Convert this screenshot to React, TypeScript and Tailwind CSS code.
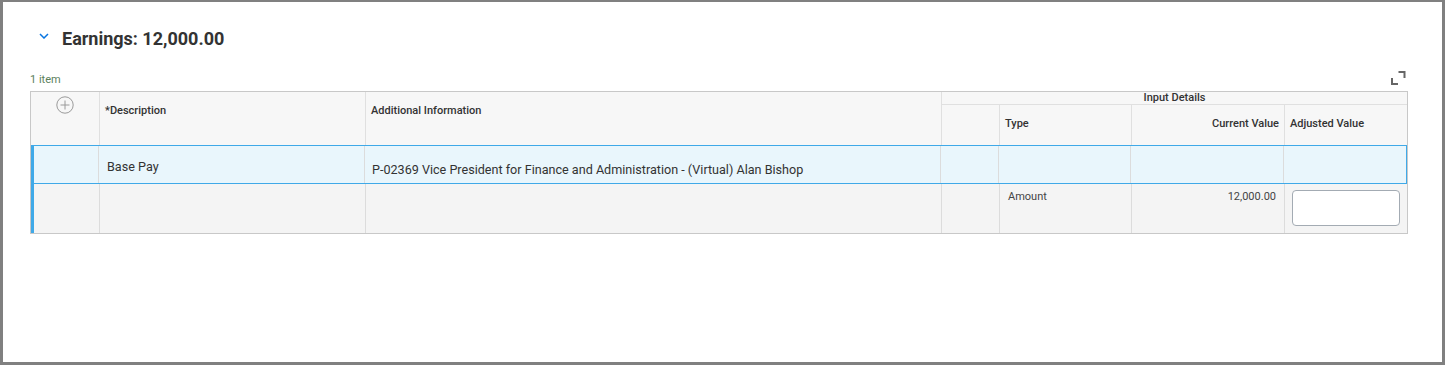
import { Fragment } from 'react';

const font = { fontFamily: 'Roboto, "Liberation Sans", sans-serif' };

function Chevron() {
  return (
    <svg width="10" height="6" viewBox="0 0 10 6" className="mt-[-7px]">
      <polyline points="1,1 5,5 9,1" fill="none" stroke="#0875e1" strokeWidth="1.5" />
    </svg>
  );
}

function ExpandIcon() {
  return (
    <svg width="15" height="14" viewBox="0 0 15 14">
      <path d="M7.5 1H13.5V7" fill="none" stroke="#666" strokeWidth="2" />
      <path d="M1 7V13H7" fill="none" stroke="#666" strokeWidth="2" />
    </svg>
  );
}

function PlusCircle() {
  return (
    <svg width="18" height="18" viewBox="0 0 18 18">
      <circle cx="9" cy="9" r="8.2" fill="none" stroke="#9a9a9a" strokeWidth="1" />
      <path d="M9 4.5V13.5M4.5 9H13.5" stroke="#9a9a9a" strokeWidth="1" />
    </svg>
  );
}

export default function App() {
  return (
    <div
      className="w-[1445px] h-[365px] bg-white border-[#808080] border-l-[3px] border-r-[3px] border-t-2 border-b-[3px] pl-[27px] pt-[25px]"
      style={font}
    >
      <div className="flex items-center h-[24px]">
        <div className="w-[9px]" />
        <Chevron />
        <h1 className="ml-[13px] text-[18px] leading-[24px] font-bold text-[#333333]">Earnings: 12,000.00</h1>
      </div>

      <div className="flex items-start justify-between w-[1378px] mt-[20px] h-[16px]">
        <span className="pt-[2px] text-[11px] leading-[14px] text-[#5b7f5b]">1 item</span>
        <div className="mr-[2px]">
          <ExpandIcon />
        </div>
      </div>

      <div className="w-[1378px] mt-[4px] border border-[#c8c8c8] text-[#333333]">
        {/* header */}
        <div className="flex h-[53px] bg-[#f7f7f7]">
          <div className="w-[69px] border-r border-[#e0e0e0] flex justify-center pt-[4px]">
            <PlusCircle />
          </div>
          <div className="w-[266px] border-r border-[#e0e0e0] pl-[5px] pt-[12px] text-[11px] leading-[14px] font-medium">
            *Description
          </div>
          <div className="w-[576px] border-r border-[#e0e0e0] pl-[5px] pt-[12px] text-[11px] leading-[14px] font-medium">
            Additional Information
          </div>
          <div className="w-[465px] flex flex-col">
            <div className="h-[13px] border-b border-[#e0e0e0] text-center text-[11px] leading-[12px] font-medium">
              Input Details
            </div>
            <div className="flex flex-1 text-[11px] leading-[14px] font-medium">
              <div className="w-[58px] border-r border-[#e0e0e0]" />
              <div className="w-[132px] border-r border-[#e0e0e0] pl-[5px] pt-[12px]">Type</div>
              <div className="w-[153px] border-r border-[#e0e0e0] pr-[5px] pt-[12px] text-right">Current Value</div>
              <div className="w-[122px] pl-[5px] pt-[12px]">Adjusted Value</div>
            </div>
          </div>
        </div>

        {/* selected row */}
        <div className="flex h-[39px] bg-[#e9f6fc] border border-l-[3px] border-[#3fa9e8]">
          <div className="w-[65px] border-r border-[#dcdcdc]" />
          <div className="w-[266px] border-r border-[#dcdcdc] pl-[8px] pt-[13px] text-[12.6px] leading-[16px]">Base Pay</div>
          <div className="w-[576px] border-r border-[#dcdcdc] pl-[7px] pt-[16px] text-[12.6px] leading-[16px]">
            P-02369 Vice President for Finance and Administration - (Virtual) Alan Bishop
          </div>
          <div className="w-[58px] border-r border-[#dcdcdc]" />
          <div className="w-[132px] border-r border-[#dcdcdc]" />
          <div className="w-[153px] border-r border-[#dcdcdc]" />
          <div className="flex-1" />
        </div>

        {/* detail row */}
        <div className="flex h-[49px] bg-[#f4f4f4] border-l-[3px] border-[#3fa9e8]">
          {[66, 266, 576, 58].map((w, i) => (
            <Fragment key={i}>
              <div className="border-r border-[#dcdcdc]" style={{ width: w }} />
            </Fragment>
          ))}
          <div className="w-[132px] border-r border-[#dcdcdc] pl-[8px] pt-[6px] text-[11px] leading-[14px] text-[#444]">Amount</div>
          <div className="w-[153px] border-r border-[#dcdcdc] pr-[8px] pt-[6px] text-right text-[11px] leading-[14px] text-[#444]">12,000.00</div>
          <div className="flex-1 pl-[7px] pt-[6px]">
            <input className="w-[108px] h-[36px] bg-white border border-[#a3abb3] rounded-[4px] outline-none" />
          </div>
        </div>
      </div>
    </div>
  );
}
